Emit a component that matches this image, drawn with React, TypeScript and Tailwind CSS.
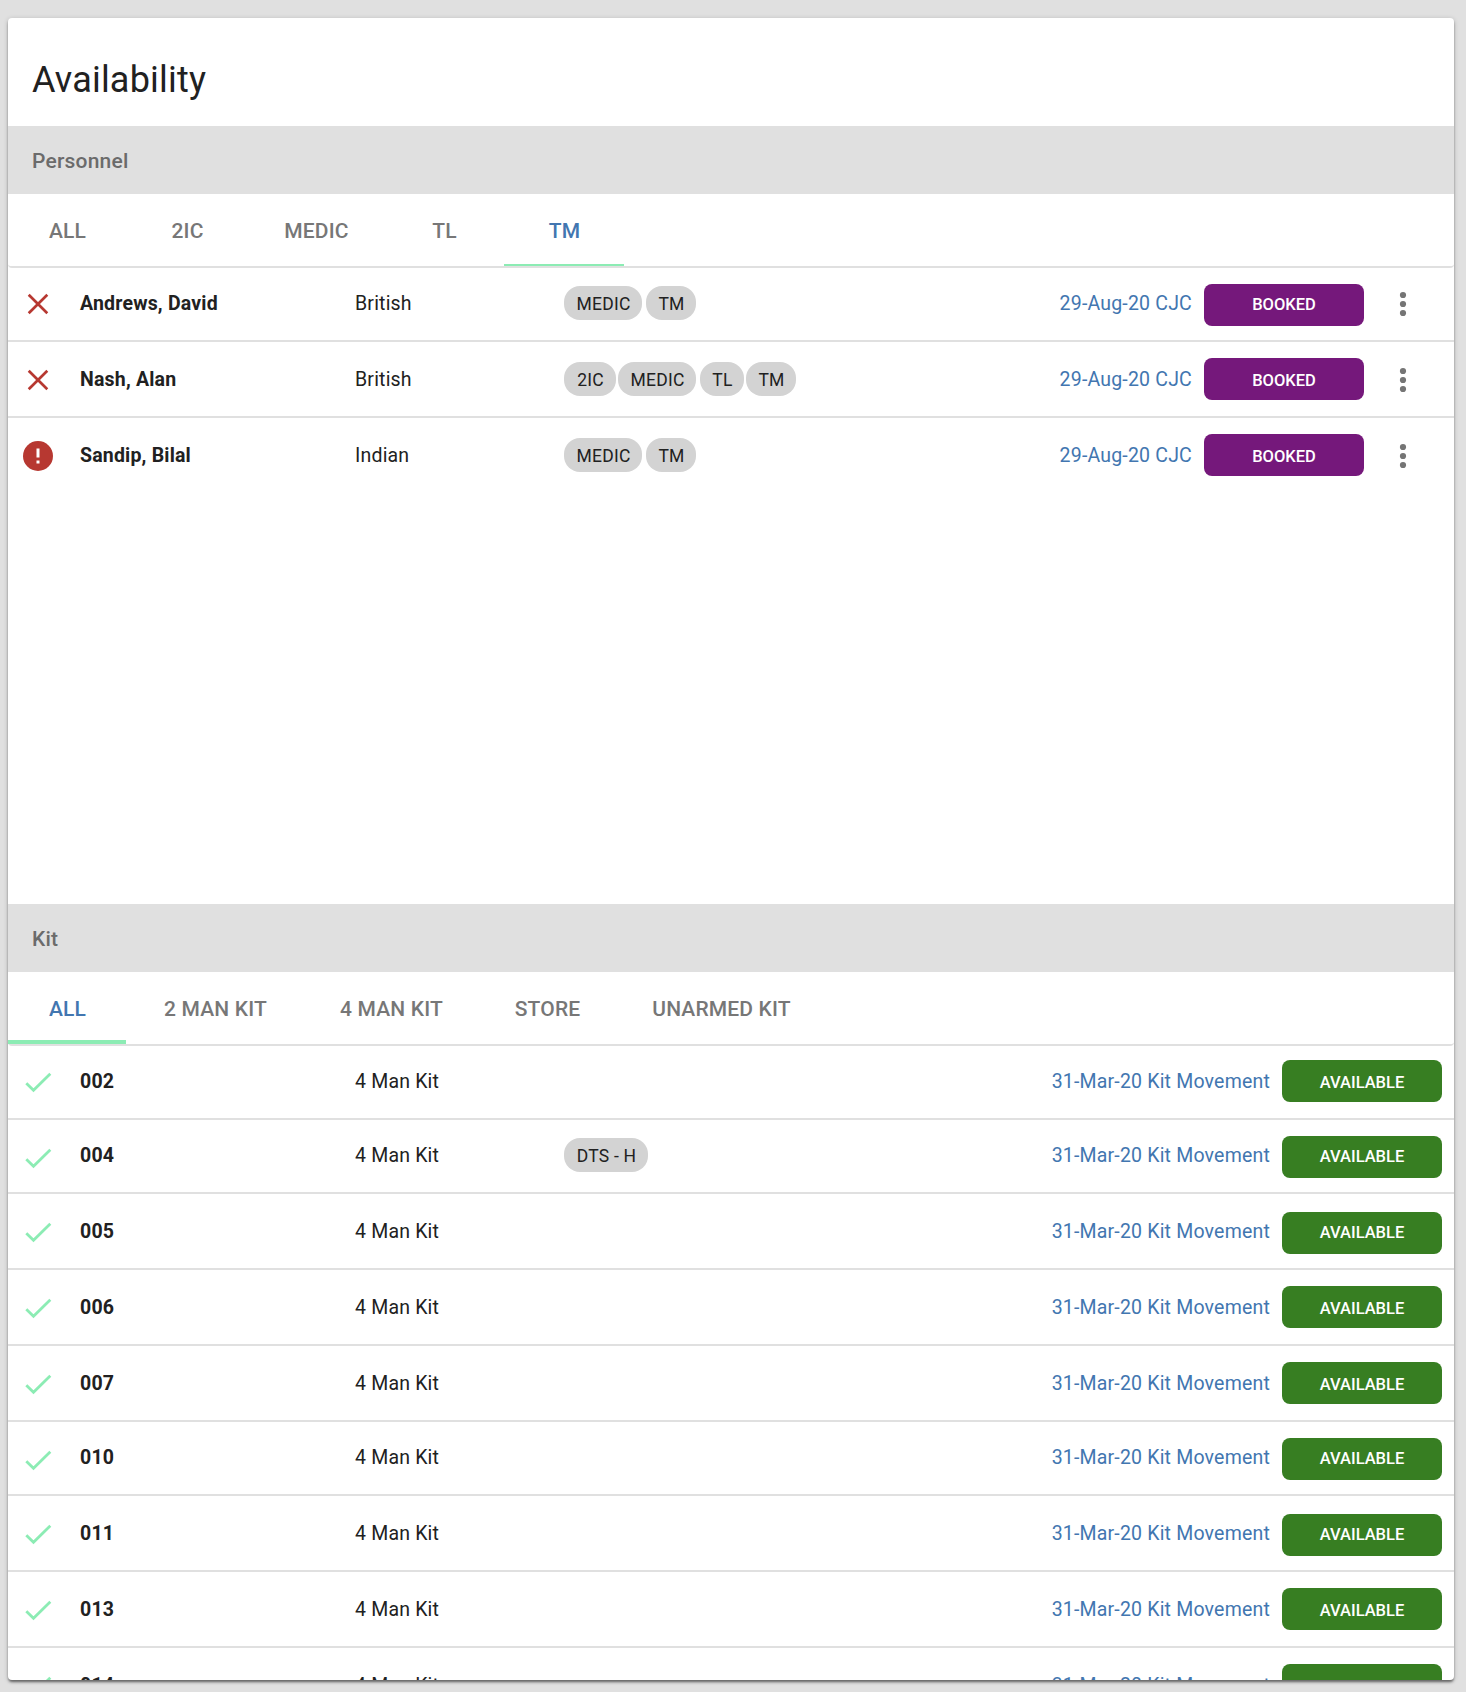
import clsx from "clsx";

type Shift = { row: string; icon: string; text: string; chips: string; button: string; buttonLabel: string };

// Rows alternate between two heights, so the cell offsets travel with the row.
const SHORT: Shift = { row: "h-[74px]", icon: "pt-[21px]", text: "pt-[22px]", chips: "pt-[18px]", button: "mt-[16px]", buttonLabel: "pt-[9px]" };
const TALL: Shift = { row: "h-[76px]", icon: "pt-[23px]", text: "pt-[24px]", chips: "pt-[20px]", button: "mt-[16px]", buttonLabel: "pt-[11px]" };
const SHORT_FIRST: Shift = { ...SHORT, button: "mt-[14px]", buttonLabel: "pt-[11px]" };
const SHORT_LOW: Shift = { ...SHORT, icon: "pt-[23px]" };
const TALL_LOW: Shift = { ...TALL, button: "mt-[18px]", buttonLabel: "pt-[9px]" };

type Item = {
  name: string;
  kind: string;
  status: "no" | "alert" | "yes";
  tags: { label: string; width: string }[];
  shift: Shift;
};

const MEDIC = { label: "MEDIC", width: "w-[78px] mr-1" };
const TM = { label: "TM", width: "w-[50px]" };

const PERSONNEL: Item[] = [
  { name: "Andrews, David", kind: "British", status: "no", tags: [MEDIC, TM], shift: SHORT },
  {
    name: "Nash, Alan",
    kind: "British",
    status: "no",
    tags: [{ label: "2IC", width: "w-[52px] mr-0.5" }, MEDIC, { label: "TL", width: "w-[44px] mr-0.5" }, TM],
    shift: TALL,
  },
  { name: "Sandip, Bilal", kind: "Indian", status: "alert", tags: [MEDIC, TM], shift: TALL },
];

const kit = (name: string, shift: Shift, tags: Item["tags"] = []): Item => ({
  name,
  kind: "4 Man Kit",
  status: "yes",
  tags,
  shift,
});

const KIT: Item[] = [
  kit("002", SHORT_FIRST),
  kit("004", SHORT_LOW, [{ label: "DTS - H", width: "w-[84px]" }]),
  kit("005", TALL_LOW),
  kit("006", TALL),
  kit("007", TALL),
  kit("010", SHORT_LOW),
  kit("011", TALL_LOW),
  kit("013", TALL),
  kit("014", TALL),
];

const PERSONNEL_TABS = [
  { label: "ALL", width: "w-[118px]" },
  { label: "2IC", width: "w-[122px]" },
  { label: "MEDIC", width: "w-[136px]" },
  { label: "TL", width: "w-[120px]" },
  { label: "TM", width: "w-[120px]" },
];

const KIT_TABS = [
  { label: "ALL", width: "w-[118px]" },
  { label: "2 MAN KIT", width: "w-[178px]" },
  { label: "4 MAN KIT", width: "w-[174px]" },
  { label: "STORE", width: "w-[138px]" },
  { label: "UNARMED KIT", width: "w-[210px]" },
];

function StatusIcon({ status }: { status: Item["status"] }) {
  if (status === "yes") {
    return (
      <svg viewBox="0 0 30 30" className="h-[30px] w-[30px]" fill="none" stroke="#8cecb4" strokeWidth="2.8">
        <path d="M3.3 16.2 10.5 23.3 27.3 6.7" />
      </svg>
    );
  }
  if (status === "no") {
    return (
      <svg viewBox="0 0 30 30" className="h-[30px] w-[30px]" fill="none" stroke="#b73831" strokeWidth="2.7">
        <path d="M5.7 5.7 24.3 24.3M24.3 5.7 5.7 24.3" />
      </svg>
    );
  }
  return (
    <svg viewBox="0 0 30 30" className="h-[30px] w-[30px]">
      <circle cx="15" cy="15" r="15" fill="#b73831" />
      <path d="M13.5 7.5h3v9h-3zM13.5 19.5h3v3h-3z" fill="#fff" />
    </svg>
  );
}

function MoreIcon() {
  return (
    <svg viewBox="0 0 30 30" className="h-[30px] w-[30px]" fill="#757575">
      <circle cx="15" cy="6" r="3.1" />
      <circle cx="15" cy="15" r="3.1" />
      <circle cx="15" cy="24" r="3.1" />
    </svg>
  );
}

function SectionHeader({ children }: { children: string }) {
  return (
    <div className="flex h-[68px] shrink-0 items-center bg-[#e0e0e0] pl-6 pt-0.5">
      <h2 className="text-[21px] font-medium leading-6 tracking-[0.2px] text-[#6b6b6b]">{children}</h2>
    </div>
  );
}

function Tabs({
  tabs,
  active,
  indicator,
}: {
  tabs: { label: string; width: string }[];
  active: string;
  indicator: string;
}) {
  return (
    <div className="flex h-[74px] shrink-0 rounded-b border-b-2 border-[#e0e0e0]">
      {tabs.map((t) => (
        <button
          key={t.label}
          className={clsx(
            "flex shrink-0 flex-col pt-[25px] text-center text-[21px] font-medium leading-6 tracking-[0.15px]",
            t.width,
            t.label === active ? "text-[#4276b0]" : "text-[#777777]",
          )}
        >
          <span className="w-full whitespace-nowrap pl-px">{t.label}</span>
          {t.label === active && <span className={clsx("mt-auto w-full bg-[#8cecb4]", indicator)} />}
        </button>
      ))}
    </div>
  );
}

function Row({ item, booked, last }: { item: Item; booked?: boolean; last?: boolean }) {
  const { shift } = item;
  return (
    <li
      className={clsx(
        "flex shrink-0 items-start border-[#e0e0e0] text-[19.5px] leading-7 tracking-[0.19px] text-[#212121]",
        shift.row,
        !last && "border-b-2",
      )}
    >
      <div className={clsx("w-[72px] shrink-0 pl-[15px]", shift.icon)}>
        <StatusIcon status={item.status} />
      </div>
      <div className={clsx("w-[275px] shrink-0 font-bold", shift.text)}>{item.name}</div>
      <div className={clsx("w-[209px] shrink-0", shift.text)}>{item.kind}</div>
      <div className={clsx("flex flex-1", shift.chips)}>
        {item.tags.map((t) => (
          <span
            key={t.label}
            className={clsx(
              "h-[34px] shrink-0 rounded-[16px] bg-[#d3d3d3] pl-px pt-[5px] text-center text-[17.5px] leading-[26px] tracking-[0.25px]",
              t.width,
            )}
          >
            {t.label}
          </span>
        ))}
      </div>
      <div className={clsx("mr-3 whitespace-nowrap text-[#4276b0]", shift.text)}>
        {booked ? "29-Aug-20 CJC" : "31-Mar-20 Kit Movement"}
      </div>
      <button
        className={clsx(
          "flex h-[42px] w-[160px] shrink-0 items-start justify-center rounded-lg text-[16.5px] font-medium leading-6 tracking-[-0.02px] text-white",
          shift.button,
          shift.buttonLabel,
          booked ? "bg-[#75187b]" : "mr-3 bg-[#377e22]",
        )}
      >
        {booked ? "BOOKED" : "AVAILABLE"}
      </button>
      {booked && (
        <div className={clsx("w-[90px] shrink-0 pl-6", shift.icon)}>
          <MoreIcon />
        </div>
      )}
    </li>
  );
}

export default function App() {
  return (
    <div className="h-[1692px] bg-[#e0e0e0] pl-2 pr-3 pt-[18px] font-[Roboto,sans-serif]">
      <div className="flex h-[1662px] flex-col overflow-hidden rounded bg-white shadow-[0_3px_3px_-1px_rgba(0,0,0,0.35),0_2px_2px_rgba(0,0,0,0.2),0_1px_5px_rgba(0,0,0,0.2)]">
        <header className="flex h-[108px] shrink-0 items-center pl-6 pt-4">
          <h1 className="text-[36px] leading-[44px] tracking-[0.2px] text-[#212121]">Availability</h1>
        </header>

        <SectionHeader>Personnel</SectionHeader>
        <Tabs tabs={PERSONNEL_TABS} active="TM" indicator="h-0.5" />
        <ul className="flex h-[636px] shrink-0 flex-col">
          {PERSONNEL.map((p, i) => (
            <Row key={p.name} item={p} booked last={i === PERSONNEL.length - 1} />
          ))}
        </ul>

        <SectionHeader>Kit</SectionHeader>
        <Tabs tabs={KIT_TABS} active="ALL" indicator="h-1" />
        <ul className="flex min-h-0 flex-1 flex-col overflow-hidden">
          {KIT.map((k) => (
            <Row key={k.name} item={k} />
          ))}
        </ul>
      </div>
    </div>
  );
}
